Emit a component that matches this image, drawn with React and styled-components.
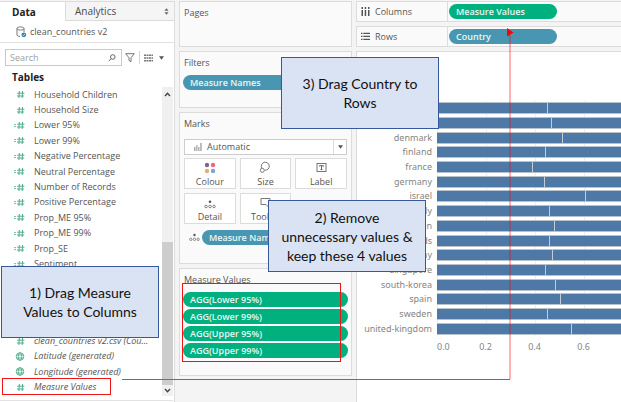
import React from "react";
import styled, { createGlobalStyle } from "styled-components";

const GlobalStyle = createGlobalStyle`
  *, *::before, *::after { box-sizing: border-box; }
  body { margin: 0; background: #f4f4f4; }
  button, input { font: inherit; color: inherit; margin: 0; }
  ul { list-style: none; margin: 0; padding: 0; }
  h2 { margin: 0; font: inherit; }
`;

const Page = styled.div`
  position: relative;
  display: grid;
  grid-template-columns: 175px 173px minmax(0, 1fr);
  column-gap: 4px;
  min-height: 100vh;
  overflow: hidden;
  background: #f4f4f4;
  color: #555;
  font: 9px/12px "Open Sans", "Noto Sans", sans-serif;
`;

/* ---------- data pane ---------- */

const DataPane = styled.aside`
  display: flex;
  flex-direction: column;
  margin-top: 1px;
  padding-bottom: 1px;
  background: #fff;
  border-right: 1px solid #dcdcdc;
  border-top: 1px solid #dcdcdc;
`;

const Tabs = styled.div`
  display: flex;
  height: 19px;
`;

const Tab = styled.button`
  display: flex;
  align-items: center;
  justify-content: space-between;
  border: 0;
  padding: 0 5px 0 ${(p) => (p.$active ? 12 : 9)}px;
  width: ${(p) => (p.$active ? "65px" : "auto")};
  flex: ${(p) => (p.$active ? "none" : 1)};
  background: ${(p) => (p.$active ? "#fff" : "#f5f5f5")};
  border-left: ${(p) => (p.$active ? "0" : "1px solid #dcdcdc")};
  border-bottom: ${(p) => (p.$active ? "0" : "1px solid #dcdcdc")};
  font-size: 10px;
  font-weight: ${(p) => (p.$active ? 700 : 400)};
  color: ${(p) => (p.$active ? "#222" : "#4b4b4b")};
`;

const SourceRow = styled.div`
  display: flex;
  align-items: center;
  gap: 3px;
  height: 22px;
  padding-left: 16px;
  border-bottom: 1px solid #e2e2e2;
`;

const SearchRow = styled.div`
  display: flex;
  align-items: center;
  height: 17px;
  margin: 6px 8px 0 5px;
`;

const SearchBox = styled.label`
  display: flex;
  align-items: center;
  width: 117px;
  height: 17px;
  padding: 0 5px 0 4px;
  border: 1px solid #c9c9c9;
  background: #fff;
`;

const SearchInput = styled.input`
  flex: 1;
  min-width: 0;
  padding: 0;
  border: 0;
  outline: 0;
  background: none;
  &::placeholder { color: #a0a0a0; opacity: 1; }
`;

const IconButton = styled.button`
  display: flex;
  padding: 0;
  border: 0;
  background: none;
  margin-left: ${(p) => p.$gap}px;
`;

const Divider = styled.span`
  width: 1px;
  height: 13px;
  margin-left: 4px;
  background: #d4d4d4;
`;

const TablesTitle = styled.h2`
  padding: 6px 0 4px 12px;
  font-weight: 700;
  font-size: 10px;
  line-height: 11px;
  color: #222;
`;

const FieldArea = styled.div`
  display: flex;
  flex: 1;
  margin-right: 1px;
  padding-bottom: 4px;
  border-bottom: 1px solid #e2e2e2;
`;

const FieldList = styled.ul`
  flex: 1;
  min-width: 0;
  display: grid;
  grid-template-rows: repeat(20, minmax(12px, 1fr));
  margin-bottom: 1px;
`;

const Field = styled.li`
  display: grid;
  grid-template-columns: 12px minmax(0, 1fr);
  column-gap: 8px;
  align-items: center;
  padding: 0 6px 0 14px;
  grid-row: ${(p) => p.$row};
  font-style: ${(p) => (p.$italic ? "italic" : "normal")};
  & > span { overflow: hidden; white-space: nowrap; text-overflow: ellipsis; }
`;

const ScrollTrack = styled.div`
  display: flex;
  flex-direction: column;
  align-items: center;
  justify-content: space-between;
  width: 11px;
  padding: 5px 0 3px;
  background: #f0f0f0;
`;

const ScrollThumb = styled.div`
  width: 11px;
  height: 143px;
  margin: auto 0 3px;
  background: #cdcdcd;
`;

/* ---------- cards ---------- */

const Cards = styled.div`
  display: flex;
  flex-direction: column;
  gap: 4px;
  padding-top: 1px;
`;

const Card = styled.section`
  min-height: ${(p) => p.$min}px;
  padding: 5px 4px 0;
  background: #fafafa;
  border: 1px solid #dcdcdc;
`;

const CardTitle = styled.h2`
  line-height: 12px;
`;

const Pill = styled.button`
  display: block;
  width: ${(p) => p.$width || "100%"};
  height: 15px;
  padding: 0 7px;
  border: 0;
  border-radius: 8px;
  background: ${(p) => (p.$green ? "#00b180" : "#4996b2")};
  color: #e9f6f3;
  font-weight: 600;
  line-height: 14px;
  text-align: left;
  white-space: nowrap;
`;

const PillStack = styled.div`
  display: flex;
  flex-direction: column;
  gap: 2px;
  margin: 6px -1px 0 -1px;
`;

const MarkType = styled.button`
  display: flex;
  align-items: center;
  width: 100%;
  height: 16px;
  margin-top: 9px;
  padding: 0 0 0 9px;
  border: 1px solid #cdcdcd;
  background: #fff;
  & > span { flex: 1; padding-left: 5px; text-align: left; }
`;

const MarkArrow = styled.i`
  display: grid;
  place-items: center;
  width: 13px;
  height: 100%;
  border-left: 1px solid #dcdcdc;
`;

const MarkGrid = styled.div`
  display: grid;
  grid-template-columns: repeat(3, 1fr);
  gap: 4px;
  margin-top: 3px;
`;

const MarkButton = styled.button`
  display: flex;
  flex-direction: column;
  align-items: center;
  justify-content: flex-end;
  gap: 2px;
  height: 31px;
  padding: 0;
  border: 1px solid #dcdcdc;
  background: #fff;
  line-height: 12px;
`;

const DetailRow = styled.div`
  display: flex;
  align-items: center;
  gap: 2px;
  margin: 6px -1px 0 5px;
`;

/* ---------- worksheet ---------- */

const Sheet = styled.main`
  display: flex;
  flex-direction: column;
  gap: 4px;
  min-width: 0;
  padding-top: 1px;
`;

const Shelf = styled.div`
  display: flex;
  align-items: center;
  height: 21px;
  background: #fafafa;
  border: 1px solid #dcdcdc;
  border-right: 0;
`;

const ShelfName = styled.span`
  display: flex;
  align-items: center;
  gap: 5px;
  width: 91px;
  height: 100%;
  padding-left: 4px;
  margin-right: 1px;
  border-right: 1px solid #dcdcdc;
`;

const Chart = styled.figure`
  display: flex;
  flex-direction: column;
  flex: 1;
  margin: 0;
  padding: 49px 0 49px;
  background: #fff;
  border-top: 1px solid #dcdcdc;
  border-left: 1px solid #dcdcdc;
  font: 9px/12px "Noto Sans", sans-serif;
  color: #858585;
`;

const Bars = styled.div`
  flex: 1;
  display: grid;
  grid-template-rows: repeat(16, minmax(12px, 1fr));
  background: repeating-linear-gradient(90deg, #eeeeee 0 1px, transparent 1px 49px) 80px 0 no-repeat;
`;

const BarRow = styled.div`
  display: grid;
  grid-template-columns: 75px minmax(0, 1fr);
  column-gap: 5px;
  align-items: center;
  text-align: right;
`;

const Bar = styled.div`
  height: 12px;
  border: 1px solid #b9c3cd;
  border-width: 1px 0;
  background: #4e79a7;
  &::before {
    content: "";
    display: block;
    width: ${(p) => p.$first}px;
    height: 100%;
    border-right: 1px solid #c3cbd3;
  }
`;

const Axis = styled.div`
  display: flex;
  justify-content: flex-start;
  padding: 5px 0 0 80px;
  font-size: 9px;
`;

const Tick = styled.span`
  width: ${(p) => (p.$zero ? 24 : 49)}px;
  text-align: ${(p) => (p.$zero ? "left" : "center")};
`;

/* ---------- annotations ---------- */

const Callout = styled.aside`
  position: absolute;
  left: ${(p) => p.$x}px;
  top: ${(p) => p.$y}px;
  display: flex;
  align-items: center;
  justify-content: center;
  width: 158px;
  height: 72px;
  border: 1px solid #35599b;
  background: #dae3f3;
  color: #111;
  font: 14px/19px Lato, sans-serif;
  text-align: center;
  white-space: pre-line;
`;

const Highlight = styled.div`
  position: absolute;
  left: ${(p) => p.$x}px;
  top: ${(p) => p.$y}px;
  width: ${(p) => p.$w}px;
  height: ${(p) => p.$h}px;
  border: 1px solid #f01414;
  pointer-events: none;
`;

const DragPath = styled.svg`
  position: absolute;
  left: 122px;
  top: 27px;
  pointer-events: none;
`;

/* ---------- icons ---------- */

const Hash = ({ calc }) => (
  <svg width="12" height="9" viewBox="0 0 12 9" stroke="#4fae8b" fill="none">
    <path d="M5.4 1 4.9 8M8.6 1 8.1 8M3.2 3.2H10.4M3 6H10.2" />
    {calc && <path d="M0 3.6H2M0 5.6H2" strokeWidth=".8" />}
  </svg>
);

const Globe = () => (
  <svg width="12" height="9" viewBox="0 0 12 9" stroke="#4fae8b" fill="none" strokeWidth=".9">
    <circle cx="6" cy="4.5" r="3.8" />
    <ellipse cx="6" cy="4.5" rx="1.7" ry="3.8" />
    <path d="M2.6 3H9.4M2.6 6H9.4" />
  </svg>
);

const Cylinder = () => (
  <svg width="11" height="12" viewBox="0 0 11 12" fill="none" stroke="#777">
    <path d="M1 2.5V9.3Q2 10.4 4 10.5M8 2.5V6M1 2.5C1 .4 8 .4 8 2.5C8 4.6 1 4.6 1 2.5" />
    <circle cx="7.8" cy="8.8" r="2.4" fill="#3584a8" stroke="none" />
    <path d="M6.7 8.8 7.5 9.6 9 8" stroke="#fff" strokeWidth=".7" />
  </svg>
);

const Magnifier = () => (
  <svg width="8" height="8" viewBox="0 0 8 8" fill="none" stroke="#666">
    <circle cx="4.8" cy="3" r="2.3" />
    <path d="M3 4.8.8 7.2" />
  </svg>
);

const Funnel = () => (
  <svg width="10" height="10" viewBox="0 0 10 10" fill="none" stroke="#777">
    <path d="M.7.7H9.3L6 4.8V8.8L4 7.5V4.8Z" />
  </svg>
);

const ListGrid = () => (
  <svg width="9" height="8" viewBox="0 0 9 8" stroke="#777" strokeWidth="1.5" strokeDasharray="2 .5">
    <path d="M0 1.2H9M0 4H9M0 6.8H9" />
  </svg>
);

const Caret = () => (
  <svg width="5" height="4" viewBox="0 0 5 4" fill="#555"><path d="M0 .3H5L2.5 3.7Z" /></svg>
);

const SortArrows = () => (
  <svg width="5" height="7" viewBox="0 0 5 7" fill="#666"><path d="M.4 2.8 2.5.3 4.6 2.8ZM.4 4.2 2.5 6.7 4.6 4.2Z" /></svg>
);

const Chevron = ({ down }) => (
  <svg width="7" height="5" viewBox="0 0 7 5" fill="none" stroke="#444" strokeWidth="1.4">
    <path d={down ? "M1 1 3.5 3.8 6 1" : "M1 4 3.5 1.2 6 4"} />
  </svg>
);

const MiniBars = () => (
  <svg width="8" height="8" viewBox="0 0 8 8" fill="#aaa"><path d="M0 4H1.5V8H0ZM2.2 2H3.5V8H2.2ZM4.2 4H5.5V8H4.2ZM6.2 0H7.7V8H6.2Z" /></svg>
);

const ColourDots = () => (
  <svg width="12" height="12" viewBox="0 0 12 12">
    <circle cx="3" cy="3" r="2.2" fill="#7c688f" />
    <circle cx="9" cy="3" r="2.2" fill="#f0657b" />
    <circle cx="3" cy="9" r="2.2" fill="#f2a678" />
    <circle cx="9" cy="9" r="2.2" fill="#7da4cd" />
  </svg>
);

const SizeRings = () => (
  <svg width="12" height="13" viewBox="0 0 12 13" fill="none" stroke="#777">
    <path d="M2.7 7A4 4 0 1 1 6 9.2" />
    <circle cx="3.3" cy="9.3" r="2" />
  </svg>
);

const LabelBox = () => (
  <svg width="11" height="12" viewBox="0 0 11 12" fill="none" stroke="#777">
    <rect x="1" y="1.5" width="9" height="8" />
    <path d="M3.5 4.5V3.7H7.5V4.5M5.5 3.7V7.5M4.5 7.5H6.5" stroke="#555" strokeWidth=".9" />
  </svg>
);

const DetailDots = () => (
  <svg width="12" height="9" viewBox="0 0 12 9" fill="none" stroke="#666" strokeWidth=".8">
    <circle cx="6" cy="1.7" r="1.3" fill="#555" stroke="none" />
    <circle cx="2" cy="6.5" r="1.3" />
    <circle cx="6" cy="6.5" r="1.3" />
    <circle cx="10" cy="6.5" r="1.3" />
  </svg>
);

const Bubble = () => (
  <svg width="11" height="12" viewBox="0 0 11 12" fill="none" stroke="#777">
    <path d="M1 1.5H10V7.5H8.5V10L6 7.5H1Z" />
  </svg>
);

const ColumnsIcon = () => (
  <svg width="9" height="9" viewBox="0 0 9 9" fill="#555"><path d="M.5 0H2V2H.5ZM.5 3H2V9H.5ZM3.7 0H5.2V2H3.7ZM3.7 3H5.2V9H3.7ZM7 0H8.5V2H7ZM7 3H8.5V9H7Z" /></svg>
);

const RowsIcon = () => (
  <svg width="9" height="9" viewBox="0 0 9 9" fill="#555"><path d="M0 .8H1.5V2H0ZM2.3 .8H9V2H2.3ZM0 3.8H1.5V5H0ZM2.3 3.8H9V5H2.3ZM0 6.8H1.5V8H0ZM2.3 6.8H9V8H2.3Z" /></svg>
);

/* ---------- data ---------- */

const fields = [
  { row: 1, name: "Household Children" },
  { row: 2, name: "Household Size" },
  { row: 3, name: "Lower 95%", calc: true },
  { row: 4, name: "Lower 99%", calc: true },
  { row: 5, name: "Negative Percentage", calc: true },
  { row: 6, name: "Neutral Percentage", calc: true },
  { row: 7, name: "Number of Records", calc: true },
  { row: 8, name: "Positive Percentage", calc: true },
  { row: 9, name: "Prop_ME 95%", calc: true },
  { row: 10, name: "Prop_ME 99%", calc: true },
  { row: 11, name: "Prop_SE", calc: true },
  { row: 12, name: "Sentiment", calc: true },
  { row: 17, name: "clean_countries v2.csv (Cou...", italic: true },
  { row: 18, name: "Latitude (generated)", italic: true, geo: true },
  { row: 19, name: "Longitude (generated)", italic: true, geo: true },
  { row: 20, name: "Measure Values", italic: true },
];

const countries = [
  ["", 111], ["", 115], ["denmark", 126], ["finland", 109], ["france", 96],
  ["germany", 108], ["israel", 149], ["italy", 113], ["japan", 118],
  ["netherlands", 113], ["norway", 116], ["singapore", 109],
  ["south-korea", 119], ["spain", 124], ["sweden", 111], ["united-kingdom", 135],
];

const measures = ["AGG(Lower 95%)", "AGG(Lower 99%)", "AGG(Upper 95%)", "AGG(Upper 99%)"];

const markButtons = [
  ["Colour", ColourDots], ["Size", SizeRings], ["Label", LabelBox],
  ["Detail", DetailDots], ["Tooltip", Bubble],
];

export default function App() {
  return (
    <Page>
      <GlobalStyle />
      <DataPane>
        <Tabs>
          <Tab $active>Data</Tab>
          <Tab>Analytics<SortArrows /></Tab>
        </Tabs>
        <SourceRow><Cylinder />clean_countries v2</SourceRow>
        <SearchRow>
          <SearchBox>
            <SearchInput type="text" placeholder="Search" aria-label="Search" />
            <Magnifier />
          </SearchBox>
          <IconButton $gap={3} aria-label="Filter"><Funnel /></IconButton>
          <Divider />
          <IconButton $gap={4} aria-label="View as list"><ListGrid /></IconButton>
          <IconButton $gap={6} aria-label="More"><Caret /></IconButton>
        </SearchRow>
        <TablesTitle>Tables</TablesTitle>
        <FieldArea>
          <FieldList>
            {fields.map((f) => (
              <Field key={f.name} $row={f.row} $italic={f.italic}>
                {f.geo ? <Globe /> : <Hash calc={f.calc} />}
                <span>{f.name}</span>
              </Field>
            ))}
          </FieldList>
          <ScrollTrack>
            <Chevron />
            <ScrollThumb />
            <Chevron down />
          </ScrollTrack>
        </FieldArea>
      </DataPane>

      <Cards>
        <Card $min={46}><CardTitle>Pages</CardTitle></Card>
        <Card $min={57}>
          <CardTitle>Filters</CardTitle>
          <PillStack><Pill>Measure Names</Pill></PillStack>
        </Card>
        <Card $min={152}>
          <CardTitle>Marks</CardTitle>
          <MarkType><MiniBars /><span>Automatic</span><MarkArrow><Caret /></MarkArrow></MarkType>
          <MarkGrid>
            {markButtons.map(([name, Icon]) => (
              <MarkButton key={name}><Icon />{name}</MarkButton>
            ))}
          </MarkGrid>
          <DetailRow><DetailDots /><Pill>Measure Names</Pill></DetailRow>
        </Card>
        <Card $min={108}>
          <CardTitle>Measure Values</CardTitle>
          <PillStack>
            {measures.map((m) => <Pill key={m} $green>{m}</Pill>)}
          </PillStack>
        </Card>
      </Cards>

      <Sheet>
        <Shelf>
          <ShelfName><ColumnsIcon />Columns</ShelfName>
          <Pill $green $width="108px">Measure Values</Pill>
        </Shelf>
        <Shelf>
          <ShelfName><RowsIcon />Rows</ShelfName>
          <Pill $width="108px">Country</Pill>
        </Shelf>
        <Chart>
          <Bars>
            {countries.map(([name, first], i) => (
              <BarRow key={i}><span>{name}</span><Bar $first={first} /></BarRow>
            ))}
          </Bars>
          <Axis>
            <Tick $zero>0.0</Tick><Tick>0.2</Tick><Tick>0.4</Tick><Tick>0.6</Tick>
          </Axis>
        </Chart>
      </Sheet>

      <Highlight $x={2} $y={378} $w={109} $h={17} />
      <Highlight $x={182} $y={283} $w={159} $h={79} />
      <DragPath width="392" height="354" viewBox="0 0 392 354" fill="none">
        <path d="M0 352.5H388" stroke="#f33" />
        <path d="M388 352V8" stroke="#f00" strokeOpacity=".6" />
        <path d="M385 1 391.5 5.5 385 9.5Z" fill="#f00" />
      </DragPath>
      <Callout $x={281} $y={57}>{"3) Drag Country to\nRows"}</Callout>
      <Callout $x={268} $y={200}>{"2) Remove\nunnecessary values &\nkeep these 4 values"}</Callout>
      <Callout $x={1} $y={266}>{"1) Drag Measure\nValues to Columns"}</Callout>
    </Page>
  );
}
